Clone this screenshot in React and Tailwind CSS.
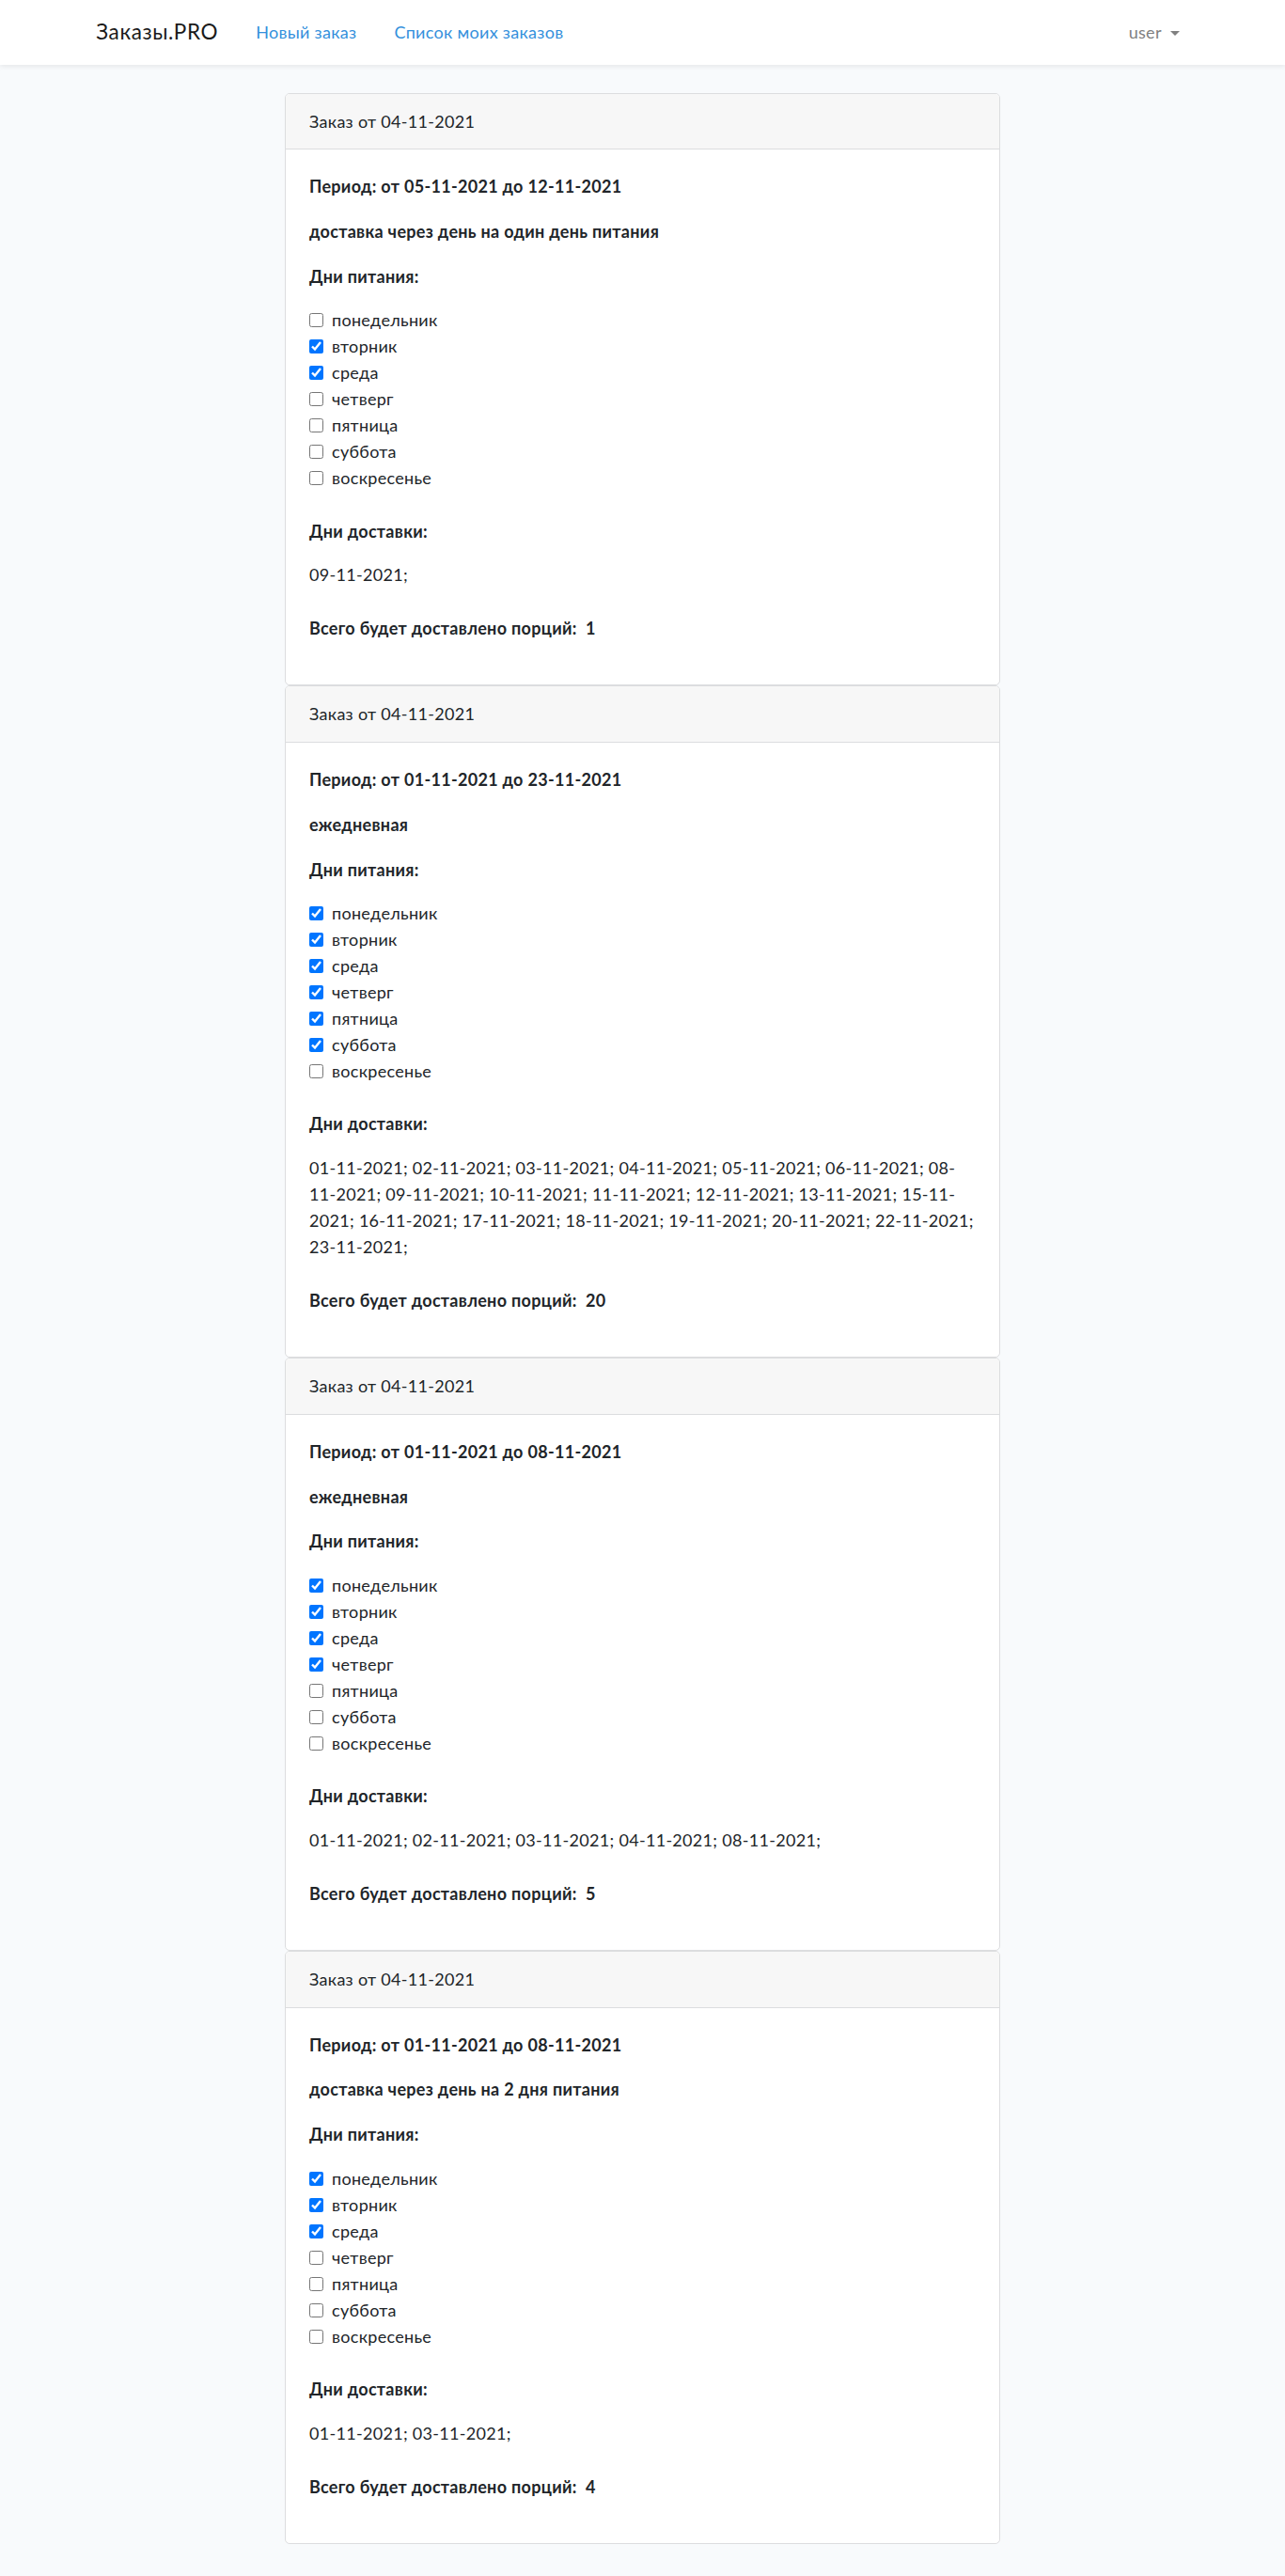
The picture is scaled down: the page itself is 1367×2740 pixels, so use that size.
import React from 'react';

const DAYS = ['понедельник', 'вторник', 'среда', 'четверг', 'пятница', 'суббота', 'воскресенье'];

const orders = [
  {
    id: 1,
    created: '04-11-2021',
    period: 'от 05-11-2021 до 12-11-2021',
    type: 'доставка через день на один день питания',
    days: [false, true, true, false, false, false, false],
    dates: ['09-11-2021;'],
    total: 1,
  },
  {
    id: 2,
    created: '04-11-2021',
    period: 'от 01-11-2021 до 23-11-2021',
    type: 'ежедневная',
    days: [true, true, true, true, true, true, false],
    dates: [
      '01-11-2021; 02-11-2021; 03-11-2021; 04-11-2021; 05-11-2021; 06-11-2021; 08-',
      '11-2021; 09-11-2021; 10-11-2021; 11-11-2021; 12-11-2021; 13-11-2021; 15-11-',
      '2021; 16-11-2021; 17-11-2021; 18-11-2021; 19-11-2021; 20-11-2021; 22-11-2021;',
      '23-11-2021;',
    ],
    total: 20,
  },
  {
    id: 3,
    created: '04-11-2021',
    period: 'от 01-11-2021 до 08-11-2021',
    type: 'ежедневная',
    days: [true, true, true, true, false, false, false],
    dates: ['01-11-2021; 02-11-2021; 03-11-2021; 04-11-2021; 08-11-2021;'],
    total: 5,
  },
  {
    id: 4,
    created: '04-11-2021',
    period: 'от 01-11-2021 до 08-11-2021',
    type: 'доставка через день на 2 дня питания',
    days: [true, true, true, false, false, false, false],
    dates: ['01-11-2021; 03-11-2021;'],
    total: 4,
  },
];

const Navbar = () => (
  <nav className="bg-white shadow-[0_2px_5px_rgba(0,0,0,0.075)] py-[10px] px-[20px]">
    <div className="mx-auto w-[1200px] px-[18.75px] flex items-center justify-between">
      <div className="flex items-center">
        <a className="text-[22.5px] leading-[36px] py-[6.25px] text-[#1a1a1a] mr-[20px] tracking-[0.6px]">Заказы.PRO</a>
        <a className="px-[20px] text-[18px] leading-[28.8px] text-[#3490dc]">Новый заказ</a>
        <a className="px-[20px] text-[18px] leading-[28.8px] text-[#3490dc]">Список моих заказов</a>
      </div>
      <div className="flex items-center px-[10px] text-[18px] leading-[28.8px] text-[#808080]">
        user
        <span className="ml-[9px] mt-[2px] w-0 h-0 border-l-[5.4px] border-r-[5.4px] border-t-[5.4px] border-l-transparent border-r-transparent border-t-[#808080]"></span>
      </div>
    </div>
  </nav>
);

const OrderCard = ({ order }) => (
  <div className="bg-white border-[1.25px] border-[#dcdddf] rounded-[5px] overflow-hidden">
    <div className="bg-[#f7f7f7] border-b-[1.25px] border-[#dcdddf] px-[25px] py-[15px] leading-[28.8px]">
      Заказ от {order.created}
    </div>
    <div className="p-[25px]">
      <p className="font-bold mb-[19px]">Период: {order.period}</p>
      <p className="font-bold mb-[19px]">{order.type}</p>
      <p className="font-bold mb-[18px]">Дни питания:</p>
      <div className="mb-[28px]">
        {DAYS.map((d, i) => (
          <label key={d} className="flex items-center h-[28px]">
            <input type="checkbox" checked={order.days[i]} readOnly className="m-0 w-[15px] h-[15px]" />
            <span className="ml-[9px]">{d}</span>
          </label>
        ))}
      </div>
      <p className="font-bold mb-[18px]">Дни доставки:</p>
      <div className="mb-[29px]">
        {order.dates.map((line, i) => (
          <div key={i} className="whitespace-nowrap leading-[28px]">{line}</div>
        ))}
      </div>
      <p className="font-bold mb-[20px]">Всего будет доставлено порций:&nbsp; {order.total}</p>
    </div>
  </div>
);

export default function App() {
  return (
    <div className="min-h-screen bg-[#f8fafc] text-[#212529] text-[18px] leading-[28.8px] tracking-[0.3px] font-[Lato,'Noto_Sans',sans-serif]">
      <Navbar />
      <main className="py-[30px]">
        <div className="mx-auto w-[761px]">
          {orders.map((o) => (
            <OrderCard key={o.id} order={o} />
          ))}
        </div>
      </main>
    </div>
  );
}
